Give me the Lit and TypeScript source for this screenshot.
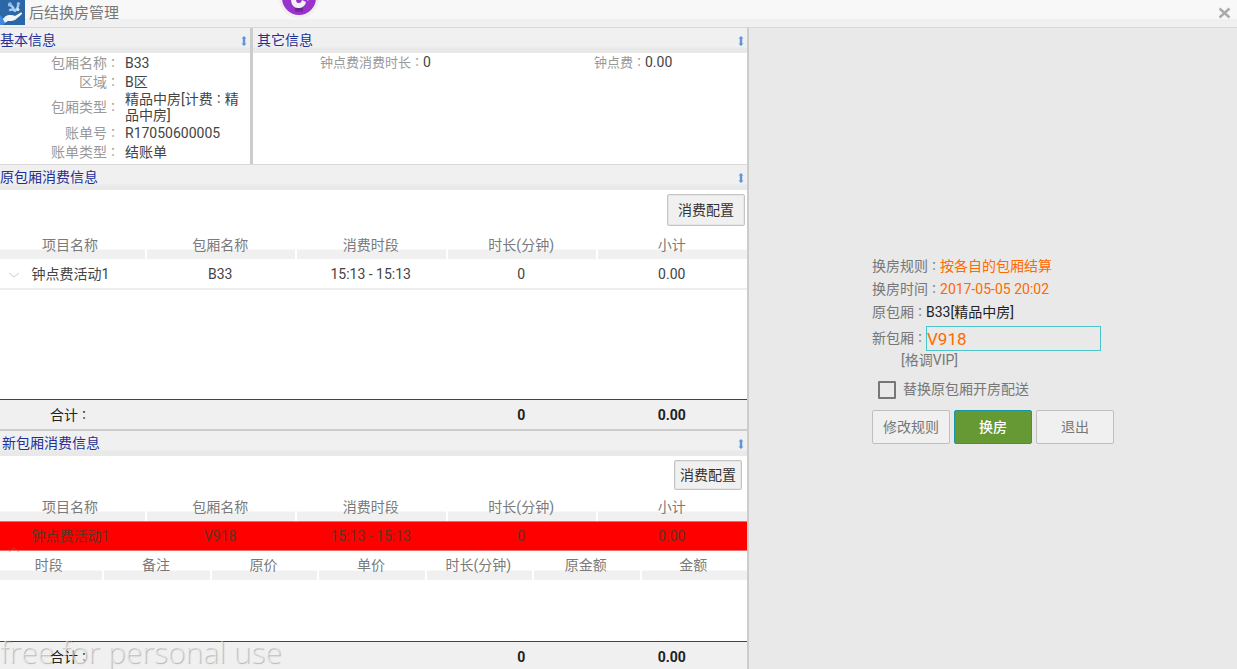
import { LitElement, html, css, svg } from "lit";
import { customElement, property, state } from "lit/decorators.js";
import { classMap } from "lit/directives/class-map.js";

/** Puts every full-width colon in its own span so that it sits mid-cell. */
const text = (value: string) =>
  value.split(/(：)/).map((part) => (part === "：" ? html`<span class="colon">：</span>` : part));

const shared = css`
  * {
    box-sizing: border-box;
  }
  .colon {
    font-family: "Noto Sans CJK TC", sans-serif;
    font-size: 12px;
    line-height: 1;
  }
  button {
    font: inherit;
    cursor: pointer;
  }
`;

@customElement("panel-header")
export class PanelHeader extends LitElement {
  static styles = [
    shared,
    css`
      :host {
        display: flex;
        flex: none;
        align-items: center;
        justify-content: space-between;
        height: 25px;
        padding-right: 3px;
        background: linear-gradient(#f0f0f0 19px, #e9e9e9 20px);
        color: #22309a;
      }
      h2 {
        margin: 0;
        font-size: 14px;
        line-height: 25px;
        font-weight: 400;
      }
      svg {
        display: block;
      }
    `,
  ];

  @property() label = "";

  render() {
    return html`<h2>${this.label}</h2>
      <svg width="6" height="10" viewBox="0 0 6 10" aria-hidden="true">
        <path d="M3 0 5.500 2.500H4.200v5h1.300L3 10 .5 7.500h1.300v-5H.5z" fill="#5f96da" />
      </svg>`;
  }
}

const COLUMNS = ["项目名称", "包厢名称", "消费时段", "时长(分钟)", "小计"];
const DETAIL_COLUMNS = ["时段", "备注", "原价", "单价", "时长(分钟)", "原金额", "金额"];

@customElement("cost-panel")
export class CostPanel extends LitElement {
  static styles = [
    shared,
    css`
      :host {
        display: flex;
        flex-direction: column;
        min-height: 0;
        overflow: hidden;
        background: #fff;
      }
      .tools {
        display: flex;
        flex: none;
        justify-content: flex-end;
        align-items: flex-start;
        height: 45px;
        padding: 4px 2px 0 0;
      }
      .tools.tight {
        height: 41px;
        padding-right: 5px;
      }
      .config {
        height: 32px;
        padding: 0 10px;
        border: 1px solid #c4c4c4;
        border-radius: 2px;
        background: #f0f0f0;
        box-shadow: inset 0 0 0 1px #e6e6e6;
        color: #333;
      }
      .tight .config {
        height: 30px;
        padding: 0 5px;
      }
      .inset {
        padding-left: 2px;
      }
      table {
        flex: none;
        width: 100%;
        table-layout: fixed;
        border-collapse: separate;
        border-spacing: 0;
        text-align: center;
      }
      .first {
        width: 19.4%;
      }
      .detail {
        margin-top: 5px;
      }
      .detail .first {
        width: 13.7%;
      }
      th {
        height: 24px;
        padding: 0 2px 0 0;
        border-left: 2px solid #fff;
        background: linear-gradient(#fff 14px, #f0f0f0 15px);
        color: #7a7a7a;
        font-weight: 400;
        line-height: 20px;
        vertical-align: top;
      }
      th:first-child {
        padding-right: 5px;
        border-left: 0;
      }
      .detail th {
        line-height: 18px;
      }
      td {
        height: 31px;
        padding: 0;
        border-bottom: 2px solid #eee;
        color: #444;
      }
      td:first-child {
        position: relative;
        padding-right: 4px;
      }
      .alert td {
        height: 30px;
        border: 1px solid #f66;
        border-width: 1px 0;
        background: #f00;
        color: #653020;
      }
      .fold {
        position: absolute;
        left: 7px;
        top: 11px;
        padding: 0;
        border: 0;
        background: none;
        line-height: 0;
        color: #ccc;
      }
      .alert .fold {
        top: 23px;
        color: rgba(150, 110, 110, 0.5);
      }
      .totals {
        display: grid;
        flex: none;
        grid-template-columns: 19.4% repeat(4, 1fr);
        height: 32px;
        margin-top: auto;
        border-top: 1px solid #444;
        border-bottom: 2px solid #ccc;
        background: #f0f0f0;
        color: #222;
        line-height: 30px;
        text-align: center;
        font-weight: 700;
      }
      .totals.last {
        height: 28px;
        border-bottom: 0;
      }
      .sum {
        padding-right: 5px;
        font-weight: 400;
      }
      .hours {
        grid-column: 4;
      }
    `,
  ];

  @property() label = "";
  @property() room = "";
  @property({ type: Boolean }) selected = false;

  private renderHead(names: string[]) {
    return html`<colgroup>
        <col class="first" />
        ${names.slice(1).map(() => html`<col />`)}
      </colgroup>
      <thead>
        <tr>
          ${names.map((name) => html`<th scope="col">${name}</th>`)}
        </tr>
      </thead>`;
  }

  render() {
    const on = this.selected;
    return html`
      <panel-header class=${classMap({ inset: on })} .label=${this.label}></panel-header>
      <div class=${classMap({ tools: true, tight: on })}>
        <button class="config" type="button">消费配置</button>
      </div>
      <table>
        ${this.renderHead(COLUMNS)}
        <tbody>
          <tr class=${classMap({ alert: on })}>
            <td>
              <button class="fold" type="button" aria-label=${on ? "收起" : "展开"}>
                <svg width="14" height="10" viewBox="0 0 14 10" fill="none" stroke="currentColor">
                  ${on ? svg`<path d="m2 7 5-4 5 4" />` : svg`<path d="m2 3 5 4 5-4" />`}
                </svg>
              </button>
              钟点费活动1
            </td>
            <td>${this.room}</td>
            <td>15:13 - 15:13</td>
            <td>0</td>
            <td>0.00</td>
          </tr>
        </tbody>
      </table>
      ${on ? html`<table class="detail">${this.renderHead(DETAIL_COLUMNS)}</table>` : null}
      <div class=${classMap({ totals: true, last: on })}>
        <span class="sum">${text("合计：")}</span>
        <span class="hours">0</span>
        <span>0.00</span>
      </div>
    `;
  }
}

@customElement("app-root")
export class AppRoot extends LitElement {
  static styles = [
    shared,
    css`
      :host {
        position: relative;
        display: flex;
        flex-direction: column;
        height: 100vh;
        overflow: hidden;
        background: #e9e9e9;
        color: #444;
        font-family: Roboto, "Noto Sans CJK SC", sans-serif;
        font-size: 14px;
        line-height: 16px;
      }
      .bar {
        display: flex;
        flex: none;
        align-items: flex-start;
        height: 28px;
        border-bottom: 1px solid #d8d8d8;
        background: linear-gradient(#f8f8f8 19px, #f0f0f0 19px);
      }
      .bar h1 {
        flex: 1;
        margin: 0 0 0 4px;
        color: #777;
        font-size: 15px;
        line-height: 26px;
        font-weight: 400;
      }
      .close {
        padding: 7px 6px 0 0;
        border: 0;
        background: none;
        line-height: 0;
      }
      .badge {
        position: absolute;
        left: 279px;
        top: 0;
      }
      main {
        display: grid;
        flex: 1;
        grid-template-columns: 749fr 488fr;
        min-height: 0;
      }
      .left {
        display: grid;
        grid-template-rows: 137px 266fr 238fr;
        min-width: 0;
        min-height: 0;
        border-right: 2px solid #ccc;
      }
      .info {
        display: grid;
        grid-template-columns: 253fr 494fr;
        min-height: 0;
        border-bottom: 1px solid #d8d8d8;
        background: #fff;
      }
      .basic {
        border-right: 3px solid #ccc;
      }
      .inset {
        padding-left: 4px;
      }
      dl,
      dd {
        margin: 0;
      }
      dt {
        color: #999;
        text-align: right;
      }
      .facts > div {
        display: grid;
        grid-template-columns: 120fr 130fr;
        align-items: center;
        min-height: 19px;
      }
      .facts dt {
        padding-right: 1px;
      }
      .facts dd {
        padding-left: 5px;
      }
      .fees {
        display: grid;
        grid-template-columns: 170fr 53fr 169fr 102fr;
        line-height: 19px;
      }
      .fees dt {
        font-size: 13px;
      }
      .right {
        display: flex;
        align-items: center;
        justify-content: center;
      }
      form {
        padding-top: 2px;
        color: #777;
        line-height: 23px;
      }
      .line {
        display: flex;
      }
      .hot {
        color: #ff6a00;
      }
      .dark {
        color: #222;
      }
      .entry {
        align-items: center;
        padding-top: 2px;
        line-height: 25px;
      }
      .entry input {
        width: 175px;
        height: 25px;
        padding: 0;
        border: 1px solid #4cc4cc;
        outline: 0;
        background: transparent;
        color: #ff6a00;
        font-family: inherit;
        font-size: 17px;
      }
      .room {
        padding-left: 29px;
        line-height: 18px;
      }
      .check {
        display: flex;
        align-items: center;
        gap: 7px;
        padding: 9px 0 9px 6px;
      }
      .check input {
        width: 18px;
        height: 18px;
        margin: 0;
        appearance: none;
        border: 2px solid #777;
        border-radius: 1px;
      }
      .check input:checked {
        background: #777;
      }
      .actions {
        display: flex;
        gap: 4px;
      }
      .actions button {
        width: 78px;
        height: 34px;
        padding: 0;
        border: 1px solid #bfbfbf;
        border-radius: 2px;
        background: #f0f0f0;
        color: #777;
      }
      .actions .go {
        border-color: #1797a6;
        background: #669933;
        color: #fff;
        font-weight: 500;
      }
      .mark {
        position: absolute;
        left: 0;
        bottom: 0;
        color: rgba(246, 246, 246, 0.6);
        font-family: "Open Sans", sans-serif;
        font-weight: 300;
        font-size: 30px;
        line-height: 34px;
        text-shadow: 1px 1px 1px rgba(0, 0, 0, 0.25);
        white-space: nowrap;
        pointer-events: none;
      }
    `,
  ];

  @state() private facts: [string, string][] = [
    ["包厢名称：", "B33"],
    ["区域：", "B区"],
    ["包厢类型：", "精品中房[计费：精品中房]"],
    ["账单号：", "R17050600005"],
    ["账单类型：", "结账单"],
  ];

  render() {
    return html`
      <header class="bar">
        <svg width="25" height="25" viewBox="0 0 25 25" aria-hidden="true">
          <rect width="25" height="25" fill="#2b67a6" />
          <path d="M1 20c3-1 4-5 8-5 3 0 5 0 6 1l5-3c2-1 3 0 1 2l-6 5c-2 1-5 1-7 1l-5 3z" fill="#f1f4f6" />
          <path d="M0 15 2 17 5 23 3 25H0z" fill="#4388e0" />
          <path d="M9 5c3 0 4 2 5 5M18 4c1 3-1 5-3 7M10 10c2-1 4 0 5 1" fill="none" stroke="#a9cdf0" stroke-width="2.4" stroke-linecap="round" />
          <circle cx="10" cy="4" r="1.8" fill="#8dbbea" />
          <circle cx="18.500" cy="3.500" r="1.600" fill="#8dbbea" />
          <circle cx="18" cy="9.500" r="1.500" fill="#d4e6f7" />
        </svg>
        <h1>后结换房管理</h1>
        <button class="close" type="button" aria-label="关闭">
          <svg width="13" height="13" viewBox="0 0 13 13" stroke="#aaa" stroke-width="2.4">
            <path d="m1.500 1.500 10 9M11.500 1.500l-10 9" />
          </svg>
        </button>
      </header>

      <main>
        <div class="left">
          <div class="info">
            <section class="basic">
              <panel-header label="基本信息"></panel-header>
              <dl class="facts">
                ${this.facts.map(
                  ([name, value]) => html`<div>
                    <dt>${text(name)}</dt>
                    <dd>${text(value)}</dd>
                  </div>`
                )}
              </dl>
            </section>
            <section>
              <panel-header class="inset" label="其它信息"></panel-header>
              <dl class="fees">
                <dt>${text("钟点费消费时长：")}</dt>
                <dd>0</dd>
                <dt>${text("钟点费：")}</dt>
                <dd>0.00</dd>
              </dl>
            </section>
          </div>
          <cost-panel label="原包厢消费信息" room="B33"></cost-panel>
          <cost-panel label="新包厢消费信息" room="V918" selected></cost-panel>
        </div>

        <aside class="right">
          <form @submit=${(e: Event) => e.preventDefault()}>
            <div class="line"><span>${text("换房规则：")}</span><span class="hot">按各自的包厢结算</span></div>
            <div class="line"><span>${text("换房时间：")}</span><span class="hot">2017-05-05 20:02</span></div>
            <div class="line"><span>${text("原包厢：")}</span><span class="dark">B33[精品中房]</span></div>
            <div class="line entry">
              <label for="room">${text("新包厢：")}</label>
              <input id="room" type="text" value="V918" />
            </div>
            <div class="room">[格调VIP]</div>
            <label class="check"><input type="checkbox" />替换原包厢开房配送</label>
            <div class="actions">
              <button type="button">修改规则</button>
              <button class="go" type="submit">换房</button>
              <button type="button">退出</button>
            </div>
          </form>
        </aside>
      </main>

      <svg class="badge" width="40" height="19" viewBox="0 0 40 19" aria-hidden="true">
        <circle cx="20" cy="-2" r="20" fill="#efefef" />
        <circle cx="20" cy="-2" r="17" fill="#9933cc" />
        <path d="M16 8h8v3.500h-8z" fill="#6d2597" />
        <path d="M12-1c0 6 3 9 7 9s7-2 8-6l-4-2c-1 3-2 3-4 3-1 0-2-1-2-4z" fill="#f2f2f2" />
        <path d="m28 0 3-1" stroke="#e6c8f4" stroke-width="1.500" />
      </svg>
      <div class="mark">free for personal use</div>
    `;
  }
}
